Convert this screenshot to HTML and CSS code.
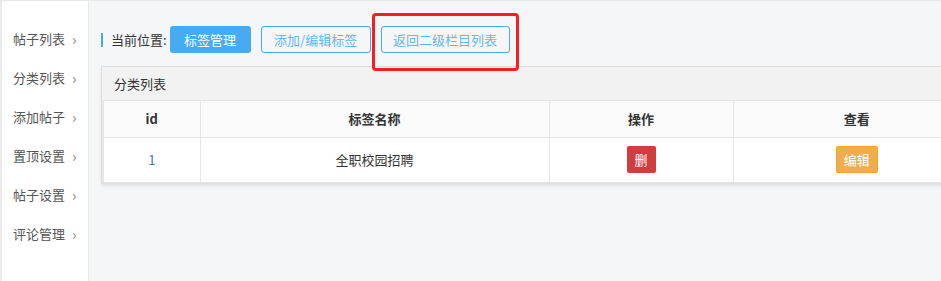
FILE: index.html
```html
<!DOCTYPE html>
<html>
<head>
  <meta charset="UTF-8">
  <title>标签管理</title>
  <link rel="stylesheet" href="styles.css">
</head>
<body>
  <div class="wrap">
    <aside class="sidebar">
      <a href="#">帖子列表 <span class="arrow">&rsaquo;</span></a>
      <a href="#">分类列表 <span class="arrow">&rsaquo;</span></a>
      <a href="#">添加帖子 <span class="arrow">&rsaquo;</span></a>
      <a href="#">置顶设置 <span class="arrow">&rsaquo;</span></a>
      <a href="#">帖子设置 <span class="arrow">&rsaquo;</span></a>
      <a href="#">评论管理 <span class="arrow">&rsaquo;</span></a>
    </aside>
    <main class="main">
      <div class="toolbar">
        <span class="crumb">当前位置:</span>
        <a href="#" class="btn btn-fill">标签管理</a>
        <a href="#" class="btn btn-line btn-add">添加/编辑标签</a>
        <a href="#" class="btn btn-line btn-back">返回二级栏目列表</a>
        <div class="mark"></div>
      </div>
      <div class="panel">
        <div class="panel-head">分类列表</div>
        <table class="list">
          <tr>
            <th class="c-id">id</th>
            <th class="c-name">标签名称</th>
            <th class="c-op">操作</th>
            <th>查看</th>
          </tr>
          <tr>
            <td class="num">1</td>
            <td>全职校园招聘</td>
            <td><a href="#" class="tag tag-del">删</a></td>
            <td><a href="#" class="tag tag-edit">编辑</a></td>
          </tr>
        </table>
      </div>
    </main>
  </div>
</body>
</html>
```

FILE: styles.css
```css
* {
  padding: 0;
  margin: 0;
  box-sizing: border-box;
  font-family: "Noto Sans CJK SC", "Liberation Sans", sans-serif;
}

body {
  width: 941px;
  height: 281px;
  overflow: hidden;
  background-color: #f5f6f8;
}

.wrap {
  display: flex;
  height: 281px;
  border-top: 1px solid #e8e8e8;
}

.sidebar {
  width: 89px;
  flex-shrink: 0;
  background-color: white;
  border-left: 2px solid #ececec;
  border-right: 1px solid #e8e8e8;
  padding-top: 18px;
}

.sidebar a {
  display: flex;
  align-items: center;
  height: 39px;
  padding-left: 11px;
  font-size: 13px;
  color: #555;
  text-decoration: none;
  white-space: nowrap;
}

.sidebar .arrow {
  margin-left: 7px;
  font-size: 15px;
  color: #888;
}

.main {
  flex: 1;
  overflow: hidden;
  padding: 25px 0 0 12px;
}

.toolbar {
  position: relative;
  display: flex;
  align-items: center;
  height: 27px;
}

.crumb {
  border-left: 2px solid #3fa9f5;
  padding-left: 8px;
  line-height: 14px;
  font-size: 13px;
  color: #333;
  margin-right: 3px;
  white-space: nowrap;
}

.btn {
  display: flex;
  align-items: center;
  justify-content: center;
  flex-shrink: 0;
  height: 27px;
  border-radius: 3px;
  font-size: 13px;
  text-decoration: none;
  white-space: nowrap;
  margin-right: 10px;
}

.btn-fill {
  width: 81px;
  background-color: #47abf4;
  color: white;
}

.btn-line {
  border: 1px solid #4aaaf2;
  color: #66b6f0;
}

.btn-add {
  width: 110px;
}

.btn-back {
  width: 129px;
}

.mark {
  position: absolute;
  left: 271px;
  top: -13px;
  width: 147px;
  height: 58px;
  border: 3px solid #f61f1f;
  border-radius: 4px;
}

.panel {
  margin-top: 13px;
  width: 880px;
  border: 1px solid #dedede;
  border-right: none;
  box-shadow: 0 2px 3px #e2e2e2;
}

.panel-head {
  height: 34px;
  line-height: 34px;
  padding-left: 12px;
  font-size: 13px;
  color: #333;
  background-color: #f2f2f2;
  border-bottom: 1px solid #e4e4e4;
}

.list {
  width: 100%;
  border-collapse: collapse;
  background-color: white;
  font-size: 13px;
  color: #333;
}

.list th,
.list td {
  border: 1px solid #e6e6e6;
  text-align: center;
}

.list tr:first-child th {
  border-top: none;
}

.list th:first-child,
.list td:first-child {
  border-left: 2px solid #e6e6e6;
}

.list th {
  height: 36px;
  background-color: #fafafa;
  font-weight: 700;
}

.list td {
  height: 45px;
}

.c-id {
  width: 97px;
}

.c-name {
  width: 349px;
}

.c-op {
  width: 184px;
}

.num {
  color: #3c7dbe;
}

.tag {
  display: inline-block;
  height: 27px;
  line-height: 27px;
  border-radius: 2px;
  color: white;
  text-decoration: none;
  font-size: 13px;
  vertical-align: middle;
}

.tag-del {
  width: 29px;
  background-color: #cf3e3e;
}

.tag-edit {
  width: 42px;
  background-color: #f0ad4e;
  border: 1px solid #eea236;
  line-height: 25px;
}
```
